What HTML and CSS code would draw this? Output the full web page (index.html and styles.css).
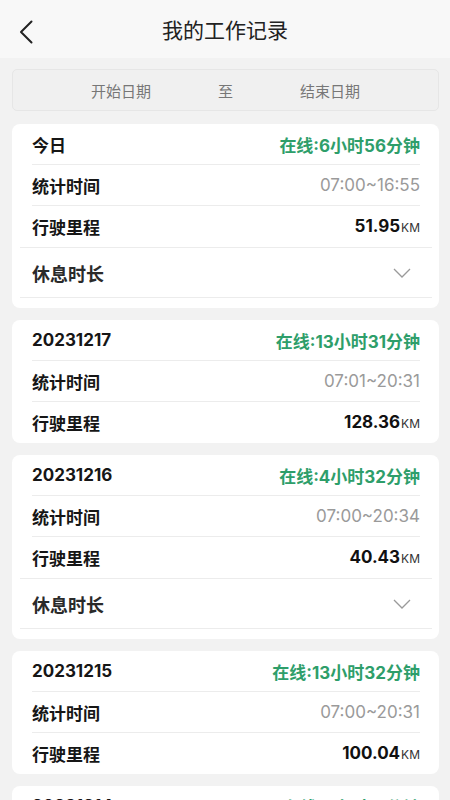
FILE: index.html
```html
<!DOCTYPE html>
<html lang="zh-CN">
<head>
<meta charset="utf-8">
<meta name="viewport" content="width=device-width, initial-scale=1">
<title>我的工作记录</title>
<link rel="stylesheet" href="styles.css">
</head>
<body>
<header class="topbar">
  <svg class="back" width="14" height="24" viewBox="0 0 14 24" aria-hidden="true">
    <polyline points="12.5,1.5 2,12 12.5,22.5" fill="none" stroke="#222" stroke-width="2" stroke-linecap="round" stroke-linejoin="round"/>
  </svg>
  <h1 class="title">我的工作记录</h1>
</header>

<div class="datebar">
  <span class="date">开始日期</span>
  <span class="to">至</span>
  <span class="date">结束日期</span>
</div>

<main class="list">
  <section class="card">
    <div class="row head"><span class="day">今日</span><span class="online">在线:6小时56分钟</span></div>
    <div class="row"><span class="label">统计时间</span><span class="time">07:00~16:55</span></div>
    <div class="row last"><span class="label">行驶里程</span><span class="km"><b>51.95</b><small>KM</small></span></div>
    <div class="rest"><span class="rest-label">休息时长</span>
      <svg class="chev" width="18" height="10" viewBox="0 0 18 10" aria-hidden="true"><polyline points="1,1 9,9 17,1" fill="none" stroke="#9a9a9a" stroke-width="1.3"/></svg>
    </div>
  </section>

  <section class="card plain">
    <div class="row head"><span class="day">20231217</span><span class="online">在线:13小时31分钟</span></div>
    <div class="row"><span class="label">统计时间</span><span class="time">07:01~20:31</span></div>
    <div class="row last"><span class="label">行驶里程</span><span class="km"><b>128.36</b><small>KM</small></span></div>
  </section>

  <section class="card">
    <div class="row head"><span class="day">20231216</span><span class="online">在线:4小时32分钟</span></div>
    <div class="row"><span class="label">统计时间</span><span class="time">07:00~20:34</span></div>
    <div class="row last"><span class="label">行驶里程</span><span class="km"><b>40.43</b><small>KM</small></span></div>
    <div class="rest"><span class="rest-label">休息时长</span>
      <svg class="chev" width="18" height="10" viewBox="0 0 18 10" aria-hidden="true"><polyline points="1,1 9,9 17,1" fill="none" stroke="#9a9a9a" stroke-width="1.3"/></svg>
    </div>
  </section>

  <section class="card plain">
    <div class="row head"><span class="day">20231215</span><span class="online">在线:13小时32分钟</span></div>
    <div class="row"><span class="label">统计时间</span><span class="time">07:00~20:31</span></div>
    <div class="row last"><span class="label">行驶里程</span><span class="km"><b>100.04</b><small>KM</small></span></div>
  </section>

  <section class="card plain">
    <div class="row head"><span class="day">20231214</span><span class="online">在线:6小时18分钟</span></div>
    <div class="row"><span class="label">统计时间</span><span class="time">07:00~20:30</span></div>
    <div class="row last"><span class="label">行驶里程</span><span class="km"><b>88.12</b><small>KM</small></span></div>
  </section>
</main>
</body>
</html>
```

FILE: styles.css
```css
* { box-sizing: border-box; }

html, body {
  margin: 0;
  padding: 0;
}

body {
  background: #f2f2f2;
  font-family: Inter, "Noto Sans CJK SC", sans-serif;
  color: #1a1a1a;
  overflow: hidden;
}

.topbar {
  height: 58px;
  background: #f8f8f8;
  display: flex;
  align-items: center;
  justify-content: center;
  position: relative;
}

.back {
  position: absolute;
  left: 19px;
  top: 20px;
}

.title {
  margin: 0;
  font-size: 21px;
  font-weight: 400;
  color: #222;
}

.datebar {
  margin: 11px 11px 0 12px;
  height: 42px;
  border: 1px solid #e6e6e6;
  border-radius: 5px;
  background: #f0f0f0;
  display: flex;
  align-items: center;
  justify-content: center;
  gap: 67px;
  font-size: 15px;
  color: #777;
}

.list {
  padding: 13px 11px 0 12px;
  display: flex;
  flex-direction: column;
  gap: 12px;
}

.card {
  background: #fff;
  border-radius: 8px;
  padding: 0 7px 10px 8px;
}

.card.plain {
  padding-bottom: 0;
}

.row {
  margin: 0 12px;
  height: 41px;
  border-bottom: 1px solid #ececec;
  display: flex;
  align-items: center;
  justify-content: space-between;
}

.row.last {
  border-bottom-color: transparent;
}

.day, .label {
  font-size: 17px;
  font-weight: 700;
  color: #161616;
}

.online {
  font-size: 17px;
  font-weight: 700;
  color: #2e9e6a;
}

.time {
  font-size: 17px;
  color: #9a9a9a;
}

.km b {
  font-size: 17px;
  font-weight: 700;
  color: #111;
}

.km small {
  font-size: 12px;
  color: #333;
  margin-left: 1px;
}

.rest {
  height: 51px;
  border-top: 1px solid #ececec;
  border-bottom: 1px solid #ececec;
  padding: 0 21px 0 12px;
  display: flex;
  align-items: center;
  justify-content: space-between;
}

.rest-label {
  font-size: 18px;
  font-weight: 600;
  color: #2a2a2a;
}

.chev {
  margin-top: 1px;
}
```
